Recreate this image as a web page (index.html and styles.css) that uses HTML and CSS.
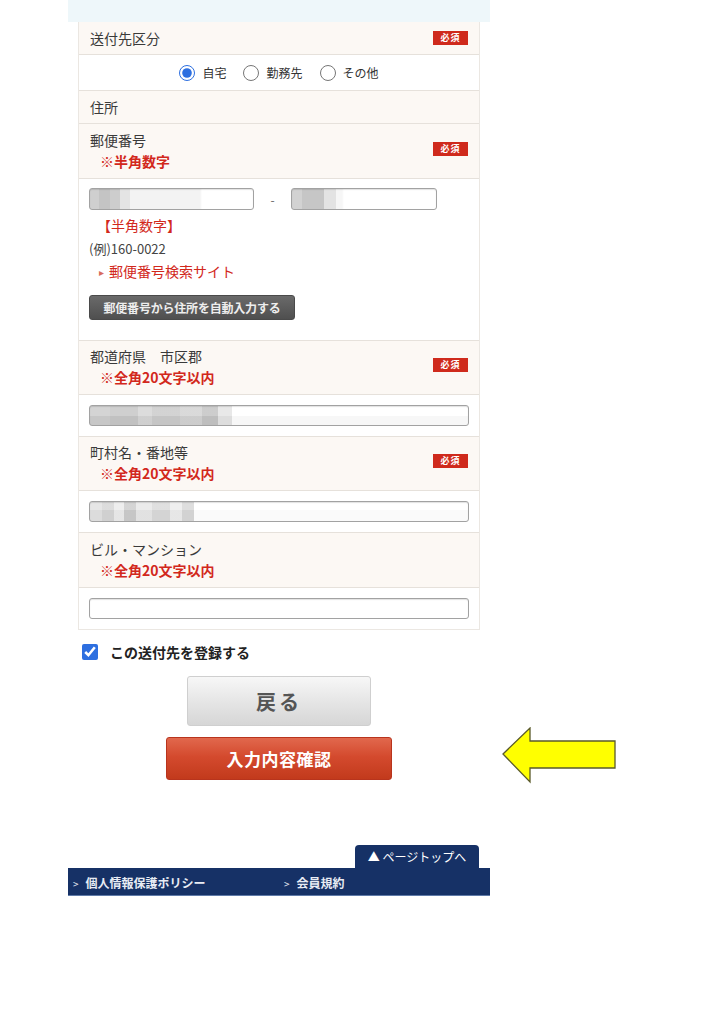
FILE: index.html
```html
<!DOCTYPE html>
<html lang="ja">
<head>
<meta charset="utf-8">
<title>送付先入力</title>
<link rel="stylesheet" href="styles.css">
</head>
<body>
<div class="page">
  <div class="band"></div>
  <div class="form">
    <div class="row head one">
      <span class="label">送付先区分</span>
      <span class="req">必須</span>
    </div>
    <div class="row radios">
      <label class="radio"><input type="radio" name="kind" checked>自宅</label>
      <label class="radio"><input type="radio" name="kind">勤務先</label>
      <label class="radio"><input type="radio" name="kind">その他</label>
    </div>
    <div class="row head one tall">
      <span class="label">住所</span>
    </div>
    <div class="row head two tall">
      <div class="labels">
        <div class="label">郵便番号</div>
        <div class="note">※半角数字</div>
      </div>
      <span class="req">必須</span>
    </div>
    <div class="row body zip">
      <div class="zipline">
        <input class="field zip1 pz1" type="text">
        <span class="dash">-</span>
        <input class="field zip2 pz2" type="text">
      </div>
      <div class="hint red first">【半角数字】</div>
      <div class="hint">(例)160-0022</div>
      <div class="hint red link"><span class="tri">&#9656;</span>郵便番号検索サイト</div>
      <button class="auto" type="button">郵便番号から住所を自動入力する</button>
    </div>
    <div class="row head two">
      <div class="labels">
        <div class="label">都道府県　市区郡</div>
        <div class="note">※全角20文字以内</div>
      </div>
      <span class="req">必須</span>
    </div>
    <div class="row body inp">
      <input class="field wide pz3" type="text">
    </div>
    <div class="row head two">
      <div class="labels">
        <div class="label">町村名・番地等</div>
        <div class="note">※全角20文字以内</div>
      </div>
      <span class="req">必須</span>
    </div>
    <div class="row body inp">
      <input class="field wide pz4" type="text">
    </div>
    <div class="row head two tall">
      <div class="labels">
        <div class="label">ビル・マンション</div>
        <div class="note">※全角20文字以内</div>
      </div>
    </div>
    <div class="row body inp">
      <input class="field wide" type="text">
    </div>
  </div>
  <label class="save"><input type="checkbox" checked>この送付先を登録する</label>
  <div class="buttons">
    <button class="back" type="button">戻る</button>
    <button class="confirm" type="button">入力内容確認</button>
  </div>
  <footer class="footer">
    <div class="tabwrap"><a class="totop" href="#">▲ ページトップへ</a></div>
    <div class="bar">
      <a class="flink" href="#"><span class="gt">&gt;</span>個人情報保護ポリシー</a>
      <a class="flink second" href="#"><span class="gt">&gt;</span>会員規約</a>
    </div>
  </footer>
</div>
<svg class="arrow" width="116" height="58" viewBox="0 0 116 58" aria-hidden="true">
  <polygon points="1,27 28,1 28,14 113,14 113,41 28,41 28,55" fill="#ffff00" stroke="#5a5a2a" stroke-width="1.3" stroke-linejoin="miter"/>
</svg>
</body>
</html>
```

FILE: styles.css
```css
* { box-sizing: border-box; }
body {
  margin: 0;
  background: #fff;
  font-family: "Noto Sans CJK JP", "Noto Sans", sans-serif;
  color: #333;
  position: relative;
  width: 724px;
  min-height: 1024px;
}
.page {
  width: 422px;
  margin-left: 68px;
}
.band {
  height: 22px;
  background: #eef7fa;
}
.form {
  margin: 0 10px 0 10px;
  border-left: 1px solid #ebe7e2;
  border-right: 1px solid #ebe7e2;
  border-bottom: 1px solid #ebe7e2;
}
.row {
  border-top: 1px solid #e6e1db;
}
.row:first-child { border-top: none; }
.head {
  background: #fcf8f4;
  display: flex;
  align-items: center;
  justify-content: space-between;
  padding: 0 11px;
}
.head.one { height: 32px; }
.head.one.tall { height: 33px; }
.label {
  font-size: 14px;
  line-height: 17px;
  color: #3a3a3a;
}
.head.two {
  padding: 5px 11px 7px 11px;
  height: 54px;
}
.head.two.tall { height: 55px; padding-top: 6px; }
.head.two .label { line-height: 21px; }
.note {
  font-size: 14px;
  line-height: 21px;
  color: #d2281c;
  font-weight: bold;
  padding-left: 10px;
}
.req {
  background: #cf2a1c;
  color: #fff;
  font-size: 9px;
  font-weight: bold;
  line-height: 14px;
  width: 35px;
  text-align: center;
  letter-spacing: 1px;
}
.head.two .req { margin-top: -3px; }
.radios {
  height: 36px;
  display: flex;
  justify-content: center;
  align-items: center;
  gap: 17px;
  padding-left: 0;
  background: #fff;
}
.radio {
  display: flex;
  align-items: center;
  font-size: 12px;
  color: #333;
}
.radio input {
  width: 16px;
  height: 16px;
  margin: 0 7px 0 0;
  accent-color: #2d6fe0;
}
.body { background: #fff; }
.zip {
  padding: 9px 11px 20px 10px;
  height: 162px;
}
.zipline {
  display: flex;
  align-items: center;
}
.field {
  display: block;
  height: 22px;
  border: 1px solid #a2a2a2;
  border-radius: 3px;
  box-shadow: inset 0 1px 1px rgba(0,0,0,0.12);
  background: #fff;
  font-family: inherit;
  font-size: 13px;
  padding: 0 4px;
  margin: 0;
}
.zip1 { width: 165px; }
.dash {
  width: 37px;
  text-align: center;
  font-size: 12px;
  color: #666;
}
.zip2 { width: 146px; }
.pz1 {
  background:
    linear-gradient(to right, #cfcfcf 0 9px, #c4c4c4 9px 20px, #cdcdcd 20px 30px, #e4e4e4 30px 40px, #f3f3f3 40px 110px, #fff 112px);
}
.pz2 {
  background:
    linear-gradient(to right, #d2d2d2 0 10px, #c6c6c6 10px 32px, #e3e3e3 32px 44px, #f6f6f6 44px 50px, #fff 52px);
}
.pz3 {
  background:
    linear-gradient(to bottom, rgba(255,255,255,0.15) 0 10px, rgba(0,0,0,0.03) 10px),
    linear-gradient(to right, #cdcdcd 0 20px, #c7c7c7 20px 48px, #d6d6d6 48px 62px, #cbcbcb 62px 90px, #d3d3d3 90px 112px, #c4c4c4 112px 128px, #e4e4e4 128px 142px, #fff 142px);
}
.pz4 {
  background:
    linear-gradient(to bottom, rgba(255,255,255,0.2) 0 8px, rgba(0,0,0,0.02) 8px),
    linear-gradient(to right, #e0e0e0 0 12px, #d4d4d4 12px 24px, #eaeaea 24px 34px, #cacaca 34px 46px, #e6e6e6 46px 62px, #d8d8d8 62px 80px, #ebebeb 80px 92px, #d6d6d6 92px 104px, #fff 104px);
}
.hint {
  font-size: 13px;
  line-height: 23px;
  color: #444;
}
.hint.red {
  color: #d2281c;
  font-size: 14px;
}
.hint.first { margin-top: 4px; padding-left: 8px; }
.link { padding-left: 10px; }
.tri {
  font-size: 10px;
  margin-right: 5px;
  color: #d86b5e;
  vertical-align: 1px;
}
.auto {
  display: block;
  margin-top: 12px;
  width: 206px;
  height: 25px;
  border: 1px solid #4a4a4a;
  border-radius: 3px;
  background: linear-gradient(#6a6a6a, #4f4f4f);
  color: #eeeeee;
  font-family: inherit;
  font-size: 12px;
  font-weight: bold;
  padding: 0;
  letter-spacing: -0.2px;
}
.inp {
  padding: 10px 11px 10px 10px;
  height: 42px;
}
.wide {
  width: 380px;
  height: 21px;
}
.save {
  display: flex;
  align-items: center;
  height: 16px;
  margin: 14px 0 0 14px;
  font-size: 14px;
  line-height: 16px;
  font-weight: bold;
  color: #222;
}
.save input {
  width: 16px;
  height: 16px;
  margin: 0 12px 0 0;
  accent-color: #2d6fe0;
}
.buttons {
  display: flex;
  flex-direction: column;
  align-items: center;
  gap: 11px;
  margin-top: 16px;
}
.back {
  width: 184px;
  height: 50px;
  border: 1px solid #cfcfcf;
  border-radius: 3px;
  background: linear-gradient(#f7f7f7, #e6e6e6 50%, #d6d6d6);
  color: #555;
  font-family: inherit;
  font-size: 20px;
  font-weight: bold;
  letter-spacing: 3px;
  padding: 0;
}
.confirm {
  width: 226px;
  height: 43px;
  border: 1px solid #b8341d;
  border-radius: 3px;
  background: linear-gradient(#e1684d, #d44a2e 45%, #c23a1c);
  color: #fff;
  font-family: inherit;
  font-size: 17px;
  font-weight: bold;
  letter-spacing: 0.5px;
  padding: 0;
}
.footer { margin-top: 65px; }
.tabwrap {
  display: flex;
  justify-content: flex-end;
  padding-right: 11px;
}
.totop {
  display: block;
  width: 124px;
  height: 23px;
  background: #163166;
  border-radius: 4px 4px 0 0;
  color: #fff;
  font-size: 12px;
  line-height: 24px;
  text-align: center;
  text-decoration: none;
}
.bar {
  height: 28px;
  background: #163166;
  display: flex;
  align-items: flex-end;
  padding: 0 0 3px 5px;
  border-bottom: 1px solid #5f7aa8;
}
.flink {
  color: #e8ecf4;
  text-decoration: none;
  font-size: 12px;
  font-weight: bold;
  line-height: 16px;
  width: 211px;
}
.flink.second { width: auto; }
.gt {
  font-size: 10px;
  font-weight: normal;
  margin-right: 7px;
}
.arrow {
  position: absolute;
  left: 502px;
  top: 727px;
}
```
